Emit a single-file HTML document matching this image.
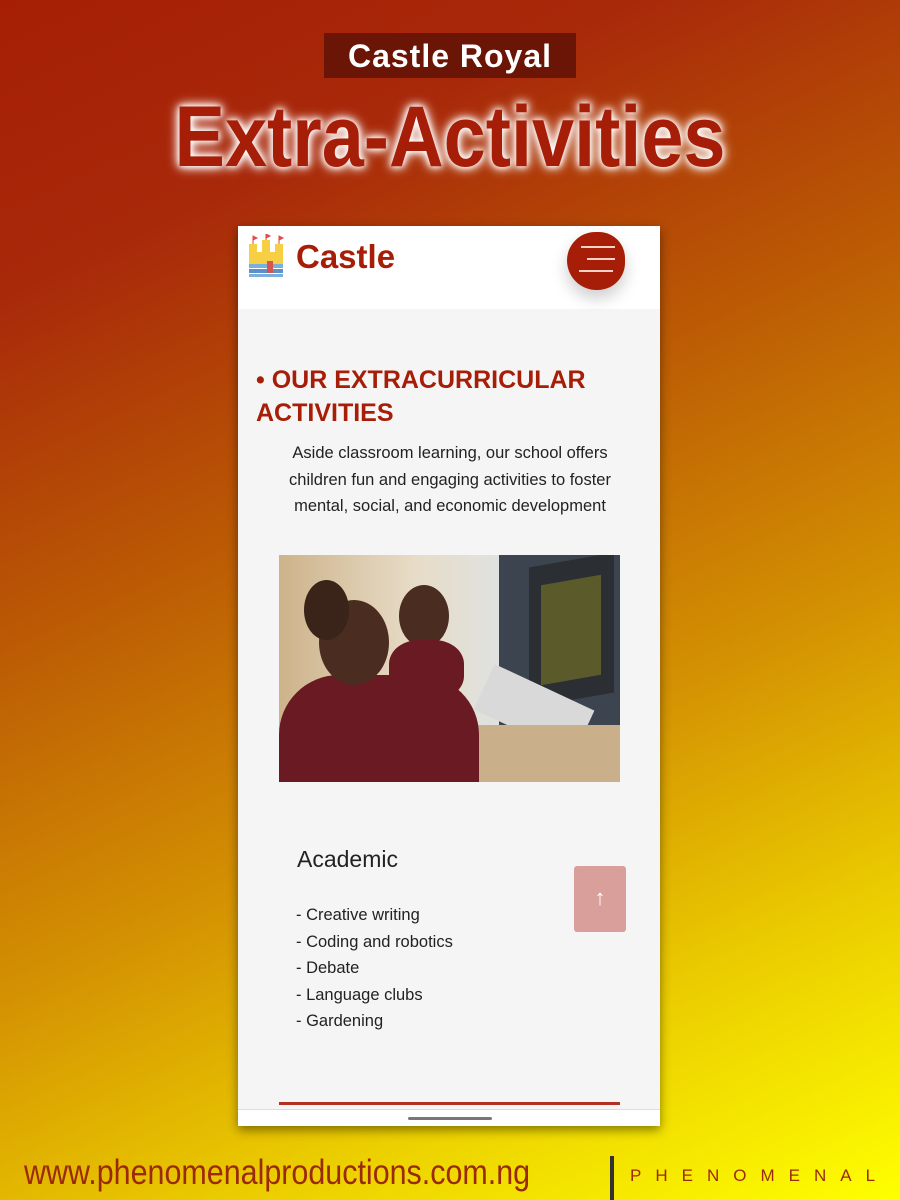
<!DOCTYPE html>
<html><head><meta charset="utf-8"><style>
*{margin:0;padding:0;box-sizing:border-box}
body{width:900px;height:1200px;overflow:hidden;position:relative;font-family:"Liberation Sans",sans-serif;
background:linear-gradient(155deg,#a61f05 0%,#a8280a 18%,#bb5a04 40%,#d49202 62%,#ecd000 82%,#ffff00 100%);}
.tag{position:absolute;left:324px;top:33px;width:252px;height:45px;background:#6a1505;color:#fff;font-weight:bold;font-size:32px;text-align:center;line-height:46px;letter-spacing:1px}
.title{position:absolute;left:0;width:900px;top:88px;text-align:center;font-weight:bold;font-size:86px;color:#a61e07;text-shadow:0 0 6px #fff,0 0 10px #fff,0 0 14px #fff;transform:scaleX(0.88)}
.phone{position:absolute;left:238px;top:226px;width:422px;height:900px;background:#f5f5f5;box-shadow:0 4px 10px rgba(0,0,0,.45)}
.hdr{height:83px;background:#fff;position:relative}
.logo{position:absolute;left:58px;top:12px;font-size:33px;font-weight:bold;color:#a61e07}
.menu{position:absolute;left:329px;top:6px;width:58px;height:58px;background:#a61e07;border-radius:50% 46% 48% 52%;box-shadow:0 8px 16px rgba(0,0,0,.2)}
.menu i{position:absolute;left:14px;width:34px;height:2px;background:#f3d3c8}
h2{position:absolute;left:18px;top:138px;width:400px;color:#a61e07;font-size:25px;line-height:33px;font-weight:bold}
.p{position:absolute;left:34px;top:214px;width:356px;text-align:center;font-size:16.5px;line-height:26.5px;color:#222}
.img{position:absolute;left:41px;top:329px;width:341px;height:227px;overflow:hidden;background:linear-gradient(90deg,#cdb38a 0,#e7dcc7 40%,#dfe2e0 65%,#6c7580 100%)}
.ac{position:absolute;left:59px;top:620px;font-size:23px;color:#222}
ul{position:absolute;left:58px;top:676px;list-style:none;font-size:16.5px;line-height:26.5px;color:#222}
.up{position:absolute;left:336px;top:640px;width:52px;height:66px;background:#d9a09b;border-radius:3px;color:#fff;font-size:22px;text-align:center;line-height:64px}
.line{position:absolute;left:41px;top:876px;width:341px;height:3px;background:#b43024}
.bot{position:absolute;left:0;top:883px;width:422px;height:17px;background:#fff;border-top:1px solid #ddd}
.bot i{position:absolute;left:170px;top:7px;width:84px;height:3px;background:#777;border-radius:2px}
.url{position:absolute;left:24px;top:1153px;font-size:35px;color:#9a2a0a;transform:scaleX(0.87);transform-origin:left top}
.bar{position:absolute;left:610px;top:1156px;width:4px;height:44px;background:#333}
.ph{position:absolute;left:630px;top:1166px;font-size:17px;letter-spacing:14px;color:#9a2a0a}
</style></head><body>
<div class="tag">Castle Royal</div>
<div class="title">Extra-Activities</div>
<div class="phone">
 <div class="hdr">
  <svg style="position:absolute;left:9px;top:8px" width="38" height="44" viewBox="0 0 38 44">
   <rect x="2" y="10" width="8" height="14" fill="#f6cf45"/><rect x="15" y="6" width="8" height="18" fill="#f6cf45"/><rect x="28" y="10" width="8" height="14" fill="#f6cf45"/>
   <rect x="2" y="18" width="34" height="14" fill="#f6cf45"/>
   <path d="M6 10V2l4 2-4 2M19 6V0l4 2-4 2M32 10V2l4 2-4 2" stroke="#d44" fill="#e55" stroke-width="1"/>
   <rect x="2" y="30" width="34" height="4" fill="#7ab0dd"/><rect x="2" y="35" width="34" height="4" fill="#5d8fc9"/><rect x="2" y="40" width="34" height="3" fill="#7ab0dd"/>
   <rect x="20" y="27" width="6" height="12" fill="#d9534f"/>
  </svg>
  <div class="logo">Castle</div>
  <div class="menu"><i style="top:14px"></i><i style="top:26px;left:20px;width:28px"></i><i style="top:38px;left:12px"></i></div>
 </div>
 <h2>• OUR EXTRACURRICULAR ACTIVITIES</h2>
 <div class="p">Aside classroom learning, our school offers children fun and engaging activities to foster mental, social, and economic development</div>
 <div class="img">
  <div style="position:absolute;left:220px;top:0;width:121px;height:227px;background:#3c4450"></div>
  <div style="position:absolute;left:250px;top:5px;width:85px;height:140px;background:#2b2f33;transform:skewY(-10deg)"></div>
  <div style="position:absolute;left:262px;top:25px;width:60px;height:100px;background:#5a5a2a;transform:skewY(-10deg)"></div>
  <div style="position:absolute;left:200px;top:130px;width:110px;height:50px;background:#d9d9d9;transform:rotate(25deg)"></div>
  <div style="position:absolute;left:150px;top:170px;width:191px;height:57px;background:#c9b08a"></div>
  <div style="position:absolute;left:0;top:120px;width:200px;height:107px;background:#6a1a22;border-radius:60px 60px 0 0"></div>
  <div style="position:absolute;left:40px;top:45px;width:70px;height:85px;background:#4a2c20;border-radius:50%"></div>
  <div style="position:absolute;left:120px;top:30px;width:50px;height:62px;background:#4a2c20;border-radius:50%"></div>
  <div style="position:absolute;left:110px;top:85px;width:75px;height:60px;background:#6a1a22;border-radius:40%"></div>
  <div style="position:absolute;left:25px;top:25px;width:45px;height:60px;background:#3a241a;border-radius:50%"></div>
 </div>
 <div class="ac">Academic</div>
 <ul><li>- Creative writing</li><li>- Coding and robotics</li><li>- Debate</li><li>- Language clubs</li><li>- Gardening</li></ul>
 <div class="up">↑</div>
 <div class="line"></div>
 <div class="bot"><i></i></div>
</div>
<div class="url">www.phenomenalproductions.com.ng</div>
<div class="bar"></div>
<div class="ph">PHENOMENAL</div>
</body></html>
